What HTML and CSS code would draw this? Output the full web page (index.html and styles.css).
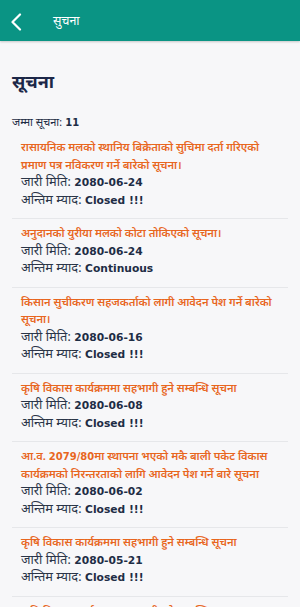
FILE: index.html
```html
<!DOCTYPE html>
<html lang="ne">
<head>
<meta charset="UTF-8">
<meta name="viewport" content="width=device-width, initial-scale=1.0">
<title>सुचना</title>
<link rel="stylesheet" href="styles.css">
</head>
<body>

<div class="appbar">
    <svg class="back" width="12" height="18" viewBox="0 0 12 18"><path d="M10 1.5L2.5 9L10 16.5" fill="none" stroke="#fff" stroke-width="2.2" stroke-linecap="round" stroke-linejoin="round"/></svg>
    <span class="appbar-title">सुचना</span>
</div>

<div class="page">
    <h1>सूचना</h1>
    <div class="count">जम्मा सूचना: <b>11</b></div>

    <div class="list">
        <div class="item">
            <div class="item-title">रासायनिक मलको स्थानिय बिक्रेताको सुचिमा दर्ता गरिएको प्रमाण पत्र नविकरण गर्ने बारेको सूचना।</div>
            <div class="meta">जारी मिति: <span class="en">2080-06-24</span></div>
            <div class="meta">अन्तिम म्याद: <span class="en">Closed !!!</span></div>
        </div>
        <div class="item">
            <div class="item-title">अनुदानको युरीया मलको कोटा तोकिएको सूचना।</div>
            <div class="meta">जारी मिति: <span class="en">2080-06-24</span></div>
            <div class="meta">अन्तिम म्याद: <span class="en">Continuous</span></div>
        </div>
        <div class="item">
            <div class="item-title">किसान सुचीकरण सहजकर्ताको लागी आवेदन पेश गर्ने बारेको सूचना।</div>
            <div class="meta">जारी मिति: <span class="en">2080-06-16</span></div>
            <div class="meta">अन्तिम म्याद: <span class="en">Closed !!!</span></div>
        </div>
        <div class="item">
            <div class="item-title">कृषि विकास कार्यक्रममा सहभागी हुने सम्बन्धि सूचना</div>
            <div class="meta">जारी मिति: <span class="en">2080-06-08</span></div>
            <div class="meta">अन्तिम म्याद: <span class="en">Closed !!!</span></div>
        </div>
        <div class="item">
            <div class="item-title">आ.व. <span class="en">2079/80</span>मा स्थापना भएको मकै बाली पकेट विकास कार्यक्रमको निरन्तरताको लागि आवेदन पेश गर्ने बारे सूचना</div>
            <div class="meta">जारी मिति: <span class="en">2080-06-02</span></div>
            <div class="meta">अन्तिम म्याद: <span class="en">Closed !!!</span></div>
        </div>
        <div class="item">
            <div class="item-title">कृषि विकास कार्यक्रममा सहभागी हुने सम्बन्धि सूचना</div>
            <div class="meta">जारी मिति: <span class="en">2080-05-21</span></div>
            <div class="meta">अन्तिम म्याद: <span class="en">Closed !!!</span></div>
        </div>
        <div class="item">
            <div class="item-title">कृषि विकास कार्यक्रममा सहभागी हुने सम्बन्धि सूचना</div>
            <div class="meta">जारी मिति: <span class="en">2080-05-14</span></div>
            <div class="meta">अन्तिम म्याद: <span class="en">Closed !!!</span></div>
        </div>
    </div>
</div>

</body>
</html>
```

FILE: styles.css
```css
body {
    margin: 0;
    background: #f7f7f9;
    font-family: 'Noto Sans Devanagari', 'Noto Sans', sans-serif;
    color: #1e2d45;
    overflow: hidden;
}
.appbar {
    height: 41px;
    box-sizing: border-box;
    padding: 3px 0 0 10px;
    background: #0a9484;
    display: flex;
    align-items: center;
    box-shadow: 0 1px 2px rgba(0,0,0,0.2);
}
.back { margin-right: 31px; }
.appbar-title { color: #fff; font-size: 12.5px; line-height: 16px; }
.page { padding: 0 12px; }
h1 {
    font-size: 18px;
    font-weight: 700;
    color: #1c2748;
    margin: 30px 0 0;
    line-height: 26px;
}
.count { font-size: 11px; margin-top: 19px; line-height: 14px; }
.count b { font-family: 'DejaVu Sans', sans-serif; font-size: 10px; font-weight: 700; line-height: 1; }
.list { margin-top: 3px; }
.item {
    padding: 7px 9px 8px;
    border-bottom: 1px solid #e6e7ea;
}
.item-title {
    color: #e8661e;
    font-size: 11.1px;
    font-weight: 600;
    line-height: 17.5px;
}
.meta {
    font-size: 12.8px;
    line-height: 17.5px;
    height: 17.5px;
    color: #2a3548;
    white-space: nowrap;
}
.en {
    font-family: 'DejaVu Sans', sans-serif;
    font-weight: 700;
    font-size: 10.7px;
    line-height: 1;
    color: #1e2d45;
}
.item-title .en { color: #e8661e; font-size: 10px; }
```
